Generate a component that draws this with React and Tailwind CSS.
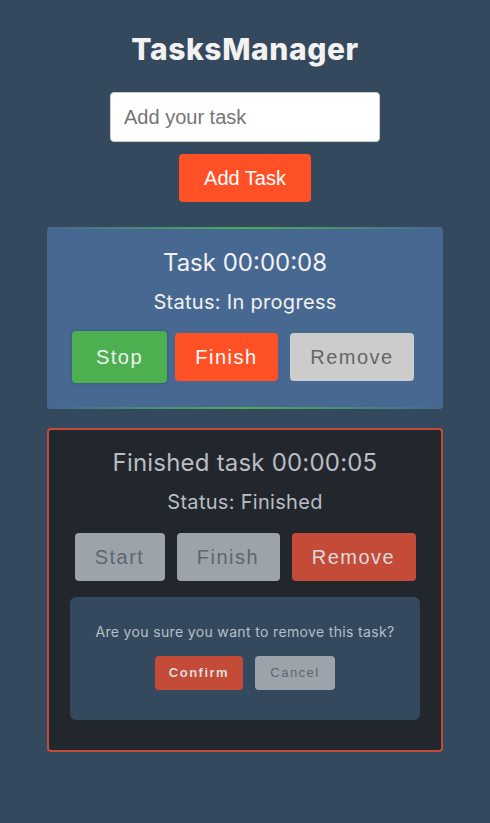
import { useState } from 'react'

const btn = 'h-12 rounded-[4px] text-[20px] tracking-[1.5px] font-["Liberation_Sans",Arial,sans-serif]'

function RunningTask() {
    return (
        <div className='w-[396px] mt-[25px] rounded-[4px] overflow-hidden bg-[#466891] flex flex-col'>
            <div className='h-[2px] bg-gradient-to-r from-[#466891] via-[#4caf50] to-[#466891]' />
            <div className='flex flex-col items-center pt-[19px] pb-[24px]'>
                <h2 className='text-[24px] leading-[30px] text-[#f2f2f2]'>Task 00:00:08</h2>
                <p className='mt-3 text-[20px] leading-[24px] tracking-[0.3px] text-[#f2f2f2]'>Status: In progress</p>
                <div className='mt-[17px] pr-1 flex items-center gap-2'>
                    <button className={`${btn} w-[95px] h-[52px] bg-[#4caf50] text-[#f0f0f0] shadow-[0_0_3px_rgba(0,0,0,0.25)]`}>Stop</button>
                    <button className={`${btn} w-[103px] bg-[#ff5026] text-white`}>Finish</button>
                    <button className={`${btn} ml-1 w-[124px] bg-[#cccccc] text-[#666]`}>Remove</button>
                </div>
            </div>
            <div className='h-[2px] bg-gradient-to-r from-[#466891] via-[#4caf50] to-[#466891]' />
        </div>
    )
}

function FinishedTask() {
    const [confirming] = useState(true)
    return (
        <div className='w-[396px] mt-[19px] rounded-[4px] border-2 border-[#c44b38] bg-[#22262d] flex flex-col items-center px-[21px] pt-[18px] pb-[30px]'>
            <h2 className='text-[24px] leading-[30px] tracking-[0.2px] text-[#b9bdc4]'>Finished task 00:00:05</h2>
            <p className='mt-3 text-[20px] leading-[24px] tracking-[0.3px] text-[#b9bdc4]'>Status: Finished</p>
            <div className='mt-[19px] flex items-center gap-3'>
                <button className={`${btn} w-[90px] bg-[#9ca3ab] text-[#5f6670]`}>Start</button>
                <button className={`${btn} w-[103px] bg-[#9ca3ab] text-[#5f6670]`}>Finish</button>
                <button className={`${btn} w-[124px] bg-[#c44b38] text-[#dcdcdc]`}>Remove</button>
            </div>
            {confirming && (
                <div className='mt-4 w-full rounded-[6px] bg-[#34495e] flex flex-col items-center pt-[26px] pb-[30px]'>
                    <p className='text-[14px] leading-[18px] tracking-[0.35px] text-[#b8bfc7]'>Are you sure you want to remove this task?</p>
                    <div className='mt-[15px] flex gap-3'>
                        <button className='w-[88px] h-[34px] rounded-[4px] bg-[#c44b38] text-[#dcdcdc] text-[13px] font-bold tracking-[1.5px] font-["Liberation_Sans",Arial,sans-serif]'>Confirm</button>
                        <button className='w-[80px] h-[34px] rounded-[4px] bg-[#9ca3ab] text-[#5f6670] text-[13px] tracking-[1.5px] font-["Liberation_Sans",Arial,sans-serif]'>Cancel</button>
                    </div>
                </div>
            )}
        </div>
    )
}

export default function App() {
    return (
        <div className='min-h-screen bg-[#34495e] flex flex-col items-center font-["Inter",sans-serif]'>
            <h1 className='mt-[30px] h-[38px] leading-[38px] text-[30px] font-extrabold tracking-[0.6px] text-[#f2f2f2]'>TasksManager</h1>
            <input
                className='mt-6 w-[270px] h-[50px] px-[13px] rounded-[4px] border border-[#ccc] bg-white text-[20px] font-["Liberation_Sans",Arial,sans-serif] placeholder:text-[#757575] outline-none'
                placeholder='Add your task'
            />
            <button className='mt-3 w-[132px] h-12 rounded-[4px] bg-[#ff5026] text-white text-[20px] font-["Liberation_Sans",Arial,sans-serif]'>Add Task</button>
            <RunningTask />
            <FinishedTask />
        </div>
    )
}
